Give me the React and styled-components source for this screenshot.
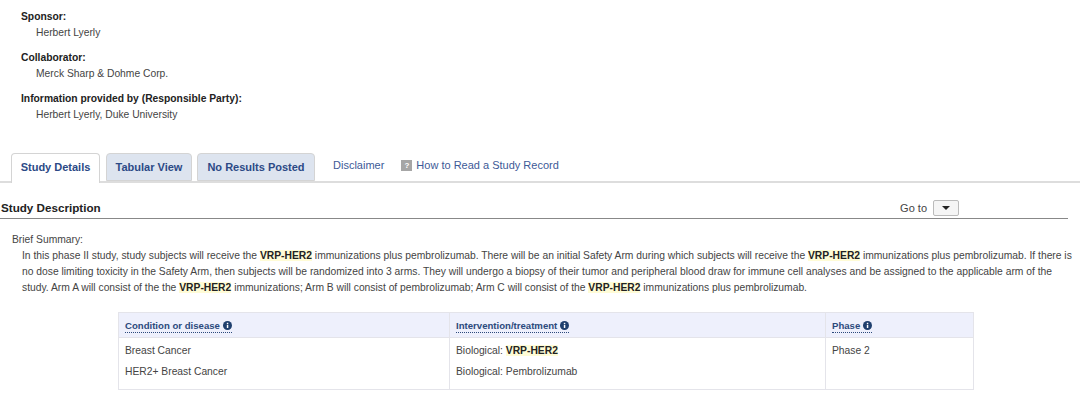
import React from 'react'
import styled, { createGlobalStyle } from 'styled-components'

const GlobalStyle = createGlobalStyle`
  html, body {
    margin: 0;
    padding: 0;
    background: #fff;
    overflow: hidden;
  }
  body {
    font-family: "Liberation Sans", Arial, sans-serif;
    font-size: 10.3px;
    color: #333;
  }
`

const Page = styled.div`
  width: 1080px;
  height: 402px;
  overflow: hidden;
`

const Sponsors = styled.dl`
  margin: 0;
  padding: 11px 0 0 21px;
  height: 141px;
  box-sizing: border-box;
`

const Term = styled.dt`
  font-weight: bold;
  color: #222;
  line-height: 12px;
  margin-top: ${p => p.$gap || 0}px;
`

const Value = styled.dd`
  margin: 3px 0 0 15px;
  line-height: 14px;
  color: #444;
`

const TabBar = styled.div`
  display: flex;
  align-items: flex-end;
  height: 40px;
  padding-left: 11px;
  border-bottom: 2px solid #ddd;
`

const Tab = styled.div`
  width: ${p => p.$w}px;
  height: ${p => (p.$active ? 30 : 28)}px;
  margin-right: ${p => p.$gap}px;
  margin-bottom: ${p => (p.$active ? -2 : 0)}px;
  padding-bottom: ${p => (p.$active ? 3 : 0)}px;
  display: flex;
  align-items: center;
  justify-content: center;
  box-sizing: border-box;
  border: 1px solid #d4d4d4;
  border-bottom: ${p => (p.$active ? 'none' : '1px solid #d4d4d4')};
  border-radius: 4px 4px 0 0;
  background: ${p => (p.$active ? '#fff' : '#dde4ef')};
  color: #2c4a86;
  font-size: 11px;
  font-weight: bold;
`

const TabLink = styled.div`
  display: flex;
  align-items: center;
  height: 28px;
  margin-left: ${p => p.$left}px;
  padding-bottom: 4px;
  box-sizing: border-box;
  color: #3d5a97;
  font-size: 11px;
`

const HelpBox = styled.span`
  width: 11px;
  height: 11px;
  margin-right: 4px;
  background: #a6a6a6;
  color: #fff;
  font-size: 8px;
  font-weight: bold;
  line-height: 11px;
  text-align: center;
`

const SectionHead = styled.div`
  display: flex;
  align-items: center;
  justify-content: space-between;
  height: 36px;
  margin-right: 12px;
  padding: 15px 0 0 1px;
  box-sizing: border-box;
  border-bottom: 1px solid #888;
`

const SectionTitle = styled.h2`
  margin: 0 0 2px;
  color: #222;
  font-size: 11.65px;
  font-weight: bold;
`

const GoTo = styled.div`
  display: flex;
  align-items: center;
  gap: 6px;
  padding-right: 109px;
  font-size: 11px;
  color: #444;
`

const GoButton = styled.button`
  width: 26px;
  height: 16px;
  padding: 0;
  display: flex;
  align-items: center;
  justify-content: center;
  border: 1px solid #bbb;
  border-radius: 2px;
  background: #f5f5f5;
`

const Caret = styled.span`
  width: 0;
  height: 0;
  border-left: 4px solid transparent;
  border-right: 4px solid transparent;
  border-top: 4px solid #222;
`

const Summary = styled.div`
  padding: 14px 8px 0 12px;
  line-height: 16px;
  color: #444;
`

const SummaryLabel = styled.div`
  line-height: 13px;
  margin-bottom: 2px;
`

const SummaryText = styled.p`
  margin: 0 0 0 10px;
  line-height: 16px;
`

const Mark = styled.b`
  color: #222;
  background: #fffcd6;
`

const Table = styled.table`
  width: 855px;
  margin: 16px 0 0 118px;
  border-collapse: collapse;
  table-layout: fixed;
`

const Th = styled.th`
  width: ${p => p.$w}px;
  height: 25px;
  padding: 1px 6px 0;
  box-sizing: border-box;
  text-align: left;
  background: #eef0fc;
  border: 1px solid #e4e4ea;
`

const HeadLabel = styled.span`
  display: inline-flex;
  align-items: center;
  gap: 3px;
  color: #2c4a7c;
  font-size: 9.6px;
  font-weight: bold;
  line-height: 13px;
  border-bottom: 1px dotted #2c4a7c;
`

const Td = styled.td`
  padding: 6px 6px 0;
  height: 52px;
  box-sizing: border-box;
  vertical-align: top;
  border: 1px solid #e4e4ea;
  color: #444;
`

const Entry = styled.div`
  line-height: 14px;
  margin-bottom: 7px;
`

const InfoIcon = () => (
  <svg width="9" height="9" viewBox="0 0 16 16">
    <circle cx="8" cy="8" r="8" fill="#1f3f6e" />
    <rect x="6.8" y="6.8" width="2.6" height="5.6" fill="#fff" />
    <rect x="6.8" y="3.2" width="2.6" height="2.3" fill="#fff" />
  </svg>
)

const App = () => (
  <Page>
    <GlobalStyle />
    <Sponsors>
      <Term>Sponsor:</Term>
      <Value>Herbert Lyerly</Value>
      <Term $gap={12}>Collaborator:</Term>
      <Value>Merck Sharp &amp; Dohme Corp.</Value>
      <Term $gap={12}>Information provided by (Responsible Party):</Term>
      <Value>Herbert Lyerly, Duke University</Value>
    </Sponsors>
    <TabBar>
      <Tab $active $w={89} $gap={6}>Study Details</Tab>
      <Tab $w={86} $gap={5}>Tabular View</Tab>
      <Tab $w={118} $gap={0}>No Results Posted</Tab>
      <TabLink $left={18}>Disclaimer</TabLink>
      <TabLink $left={17}><HelpBox>?</HelpBox>How to Read a Study Record</TabLink>
    </TabBar>
    <SectionHead>
      <SectionTitle>Study Description</SectionTitle>
      <GoTo>Go to <GoButton><Caret /></GoButton></GoTo>
    </SectionHead>
    <Summary>
      <SummaryLabel>Brief Summary:</SummaryLabel>
      <SummaryText>
        In this phase II study, study subjects will receive the <Mark>VRP-HER2</Mark> immunizations plus pembrolizumab. There will be an initial Safety Arm during which subjects will receive the <Mark>VRP-HER2</Mark> immunizations plus pembrolizumab. If there is no dose limiting toxicity in the Safety Arm, then subjects will be randomized into 3 arms. They will undergo a biopsy of their tumor and peripheral blood draw for immune cell analyses and be assigned to the applicable arm of the study. Arm A will consist of the the <Mark>VRP-HER2</Mark> immunizations; Arm B will consist of pembrolizumab; Arm C will consist of the <Mark>VRP-HER2</Mark> immunizations plus pembrolizumab.
      </SummaryText>
    </Summary>
    <Table>
      <thead>
        <tr>
          <Th $w={331}><HeadLabel>Condition or disease <InfoIcon /></HeadLabel></Th>
          <Th $w={376}><HeadLabel>Intervention/treatment <InfoIcon /></HeadLabel></Th>
          <Th $w={148}><HeadLabel>Phase <InfoIcon /></HeadLabel></Th>
        </tr>
      </thead>
      <tbody>
        <tr>
          <Td>
            <Entry>Breast Cancer</Entry>
            <Entry>HER2+ Breast Cancer</Entry>
          </Td>
          <Td>
            <Entry>Biological: <Mark>VRP-HER2</Mark></Entry>
            <Entry>Biological: Pembrolizumab</Entry>
          </Td>
          <Td>
            <Entry>Phase 2</Entry>
          </Td>
        </tr>
      </tbody>
    </Table>
  </Page>
)

export default App
